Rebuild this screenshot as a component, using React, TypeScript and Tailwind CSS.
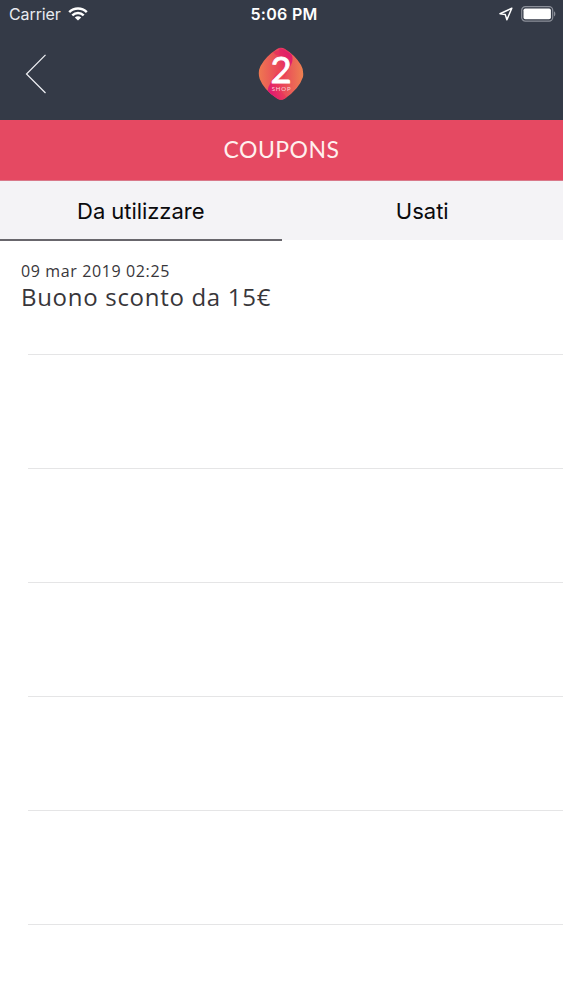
interface Coupon {
  date: string;
  title: string;
}

const coupons: Coupon[] = [
  { date: "09 mar 2019 02:25", title: "Buono sconto da 15€" },
];

const EMPTY_ROWS = 5;

function StatusBar() {
  return (
    <div className="grid h-[28px] grid-cols-3 items-center text-white">
      <div className="flex items-center gap-[7px] pl-[9px]">
        <span className="text-[16px] leading-none tracking-[-0.1px] text-[#e8ebf1]">Carrier</span>
        <svg width="20" height="14" viewBox="0 0 20 14" fill="none" stroke="currentColor" strokeWidth="2.5">
          <path d="M1.2 5.2C6.2 0.4 13.8 0.4 18.8 5.2" />
          <path d="M4.3 8.4C7.6 5.3 12.4 5.3 15.7 8.4" />
          <path d="M10 13.6L6.8 10.5C8.6 8.9 11.4 8.9 13.2 10.5Z" fill="currentColor" stroke="none" />
        </svg>
      </div>
      <div className="pl-[5px] text-center text-[16px] font-semibold leading-none tracking-[0.3px]">
        5:06 PM
      </div>
      <div className="flex items-center justify-end gap-[8px] pr-[7px]">
        <svg width="14" height="14" viewBox="0 0 14 14" fill="none" stroke="currentColor" strokeWidth="1.5" strokeLinejoin="round">
          <path d="M12.8 1.2L1 6.8L6.3 7.6L7.9 12.8Z" />
        </svg>
        <svg width="35" height="16" viewBox="0 0 35 16">
          <rect x="0.7" y="0.7" width="31" height="14.4" rx="3.6" fill="none" stroke="#8b8f99" strokeWidth="1.2" />
          <rect x="2.5" y="2.5" width="27.4" height="10.8" rx="1.8" fill="#fff" />
          <path d="M33 5.3C34.8 6.2 34.8 9.6 33 10.5Z" fill="#8b8f99" />
        </svg>
      </div>
    </div>
  );
}

function Logo() {
  return (
    <svg className="overflow-visible" width="46" height="54" viewBox="0 0 46 54">
      <defs>
        <linearGradient id="orange" x1="0" y1="0" x2="1" y2="0">
          <stop offset="0" stopColor="#ee7a50" />
          <stop offset="0.5" stopColor="#e9415c" />
          <stop offset="1" stopColor="#ed8350" />
        </linearGradient>
        <linearGradient id="pink" x1="0" y1="1" x2="1" y2="0">
          <stop offset="0" stopColor="#dc087d" />
          <stop offset="0.5" stopColor="#ee4a50" />
          <stop offset="1" stopColor="#d70786" />
        </linearGradient>
        <clipPath id="badge">
          <path d="M19 2Q23 -0.5 27 2Q37 8 43 18Q46 23 45 30Q41 42 27 51.5Q23 54 19 51.5Q6 43 1.7 32Q-0.5 25 2.5 19Q8 9 19 2Z" />
        </clipPath>
      </defs>
      <g clipPath="url(#badge)">
        <rect width="46" height="54" fill="url(#orange)" />
        <path d="M21 0L33 7Q36 12 33 18L22 38Q21 43 27 48L29 51L23 54L10 46Q9 41 13 35L22 20Z" fill="url(#pink)" />
        <path d="M15 5L27 1L34 8Q35 13 32 17Q28 9 18 8Z" fill="#e3215f" opacity="0.55" />
      </g>
      <text
        x="23.2"
        y="35.5"
        textAnchor="middle"
        fill="#fff"
        stroke="#fff"
        strokeWidth="0.8"
        fontFamily="Lato, sans-serif"
        fontSize="36.5"
      >
        2
      </text>
      <text x="23.6" y="43.8" textAnchor="middle" fill="#fbd5da" fontFamily="Lato, sans-serif" fontSize="6" letterSpacing="0.9">
        SHOP
      </text>
    </svg>
  );
}

function Header() {
  return (
    <header className="h-[120px] bg-[#343a47]">
      <StatusBar />
      <div className="grid h-[92px] grid-cols-3 items-center">
        <button className="pl-[25px]" aria-label="Indietro">
          <svg width="22" height="40" viewBox="0 0 22 40" fill="none" stroke="#f0f1f5" strokeWidth="1.2">
            <path d="M20.5 0.8L1.5 20L20.5 39" />
          </svg>
        </button>
        <div className="flex justify-center">
          <Logo />
        </div>
      </div>
    </header>
  );
}

function Tabs() {
  return (
    <nav className="grid h-[59px] grid-cols-2 bg-[#f4f3f6] text-[22px] text-[#0a0a0c]">
      <button className="h-[60px] border-b-2 border-[#68666c] pt-[3px] tracking-[-0.05px]">Da utilizzare</button>
      <button className="h-[60px] pt-[1px]">Usati</button>
    </nav>
  );
}

export default function App() {
  return (
    <div className="flex h-[1000px] w-full flex-col overflow-hidden bg-white font-['Inter',sans-serif]">
      <Header />
      <div className="flex h-[61px] items-center justify-center border-b border-[#d9788a] bg-[#e54962] pb-[2px] font-['Lato',sans-serif] text-[23px] tracking-[0.5px] text-[#fff0ee]">
        COUPONS
      </div>
      <Tabs />
      <ul>
        {coupons.map((coupon) => (
          <li key={coupon.title} className="flex h-[115px] flex-col pt-[20px] font-['Open_Sans',sans-serif] text-[#38363a]">
            <span className="pl-[21px] text-[16px] leading-[22px] tracking-[0.62px]">{coupon.date}</span>
            <span className="pl-[21px] text-[24px] leading-[30px] tracking-[0.7px]">{coupon.title}</span>
            <div className="mt-auto ml-[28px] border-b border-[#e5e5e6]" />
          </li>
        ))}
        {Array.from({ length: EMPTY_ROWS }, (_, i) => (
          <li key={i} className="ml-[28px] h-[114px] border-b border-[#e5e5e6]" />
        ))}
      </ul>
    </div>
  );
}
